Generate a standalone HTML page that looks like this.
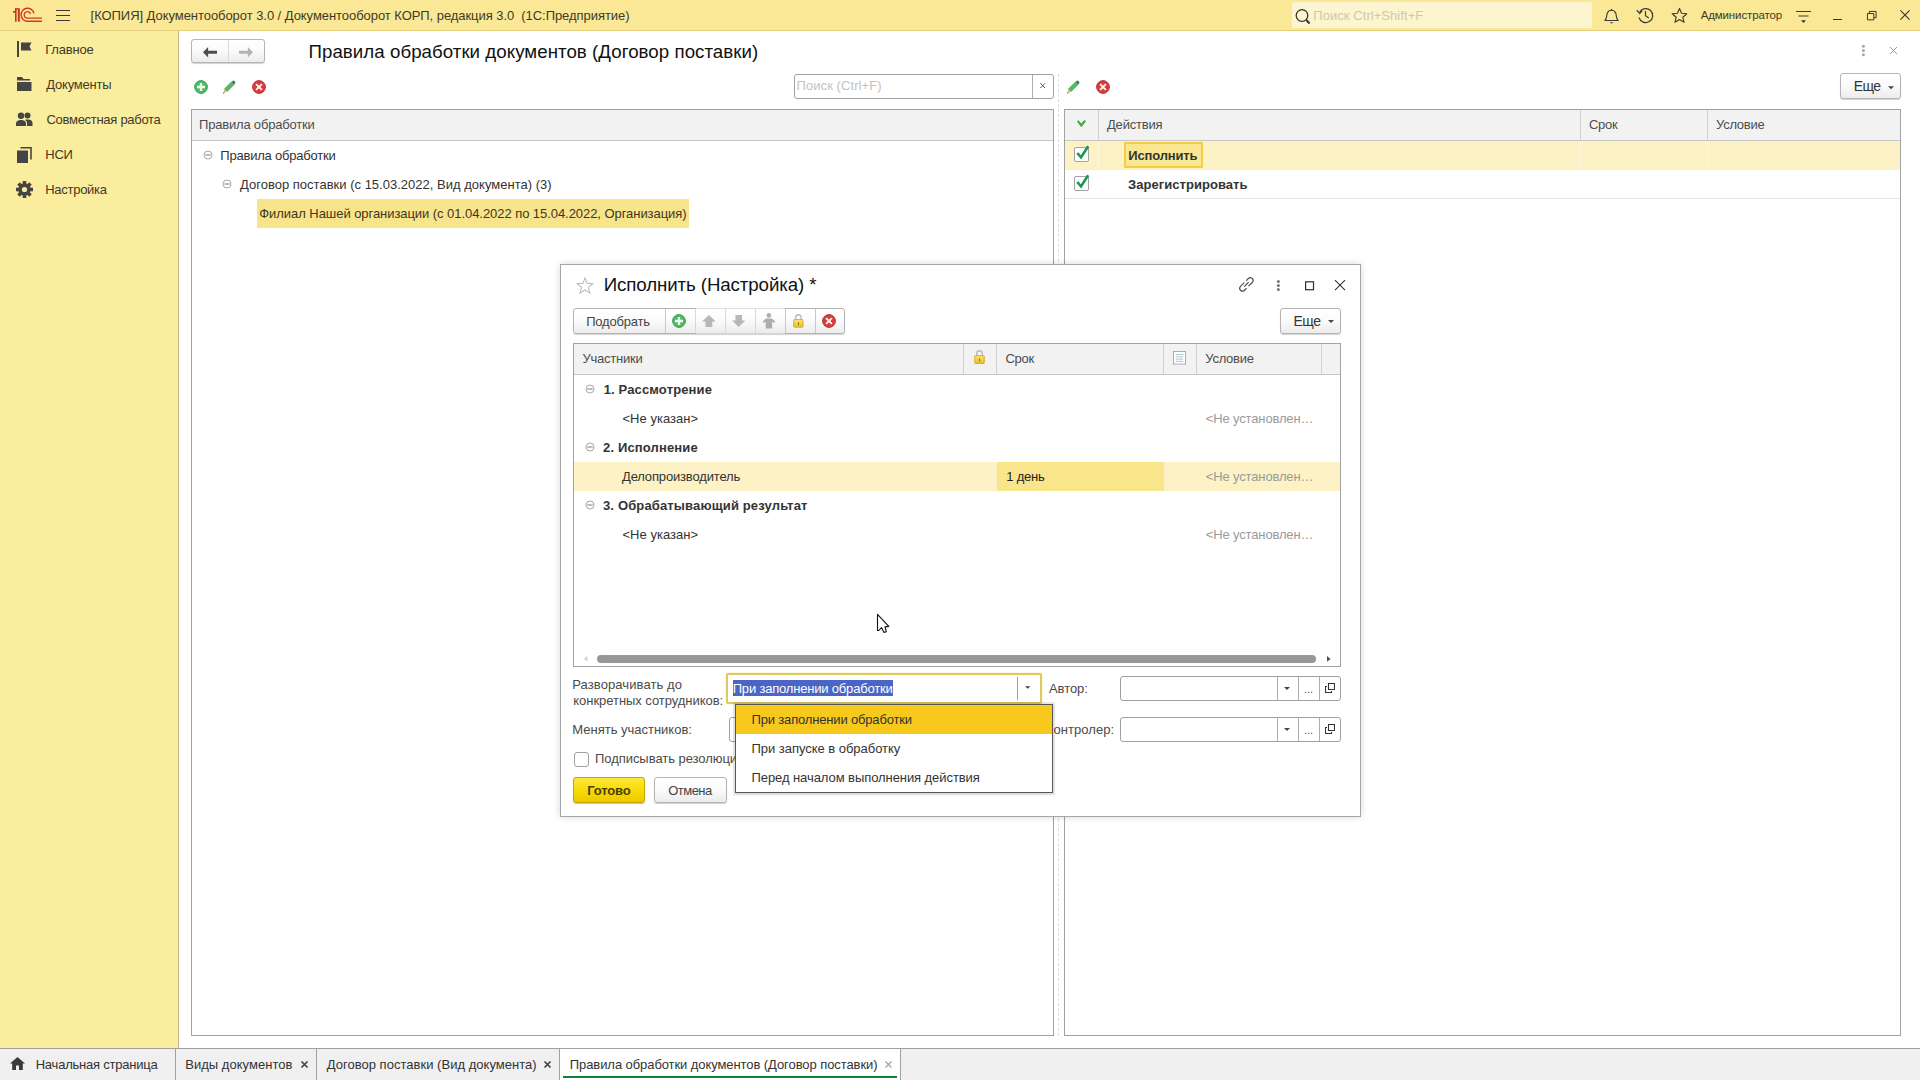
<!DOCTYPE html>
<html lang="ru">
<head>
<meta charset="utf-8">
<title>1C</title>
<style>
*{box-sizing:border-box;margin:0;padding:0}
html,body{width:1920px;height:1080px;overflow:hidden;background:#fff}
body{font-family:"Liberation Sans",sans-serif;font-size:13px;color:#333;position:relative}
.abs{position:absolute}
.t{position:absolute;white-space:pre;line-height:16px;height:16px}
svg{position:absolute;overflow:visible}
/* title bar */
#titlebar{position:absolute;left:0;top:0;width:1920px;height:31px;background:#fae896;border-bottom:1px solid #e3cf7c}
#gsearch{position:absolute;left:1292px;top:2px;width:300px;height:26px;background:#fdf5d0;border-radius:3px}
/* sidebar */
#sidebar{position:absolute;left:0;top:31px;width:179px;height:1017px;background:#fbed9e;border-right:1px solid #c0b788}
#sidebar .t{color:#403a28;left:46px}
/* tab bar */
#tabbar{position:absolute;left:0;top:1048px;width:1920px;height:32px;background:#f0f0f0;border-top:1px solid #a0a0a0}
#tabbar .t{color:#333;top:8px}
.tabsep{position:absolute;top:0;width:1px;height:31px;background:#a0a0a0}
/* buttons */
.btn{position:absolute;border:1px solid #b4b4b4;border-radius:3px;background:linear-gradient(#ffffff 0%,#fbfbfb 45%,#ececec 100%);box-shadow:0 1px 1px rgba(0,0,0,.18)}
.grid{position:absolute;border:1px solid #a1a1a1;background:#fff}
.ghead{position:absolute;left:0;top:0;right:0;height:31px;background:#f2f2f2;border-bottom:1px solid #c6c6c6}
.ghead .t{color:#4d4d4d;top:7px}
.colsep{position:absolute;top:0;width:1px;height:30px;background:#d0d0d0}
.field{position:absolute;border:1px solid #a0a0a0;border-radius:3px;background:#fff}
.fsep{position:absolute;top:0;width:1px;height:100%;background:#adadad}
</style>
</head>
<body>

<!-- ================= TITLE BAR ================= -->
<div id="titlebar">
  <!-- 1C logo -->
  <svg style="left:0;top:0" width="50" height="30" viewBox="0 0 50 30">
    <g fill="#c8371c"><rect x="17.800" y="8.200" width="2" height="13.500"/><rect x="15" y="8.200" width="3" height="1.400"/><rect x="15" y="8.200" width="1.600" height="13.500"/><rect x="13" y="11" width="2.200" height="1.700"/></g>
    <g fill="none" stroke="#cf3b1f"><path d="M33.960 13.350 A6.500 6.500 0 1 0 27.600 21.200 H41.900" stroke-width="1.400"/><path d="M30.490 14.070 A3.200 3.200 0 1 0 27.400 18.100 H41.900" stroke-width="1.250"/></g>
  </svg>
  <!-- hamburger -->
  <div class="abs" style="left:56px;top:10px;width:14px;height:1px;background:#3a3a3a"></div>
  <div class="abs" style="left:56px;top:15px;width:14px;height:1px;background:#3a3a3a"></div>
  <div class="abs" style="left:56px;top:20px;width:14px;height:1px;background:#3a3a3a"></div>
  <div class="t" id="apptitle" style="left:90.60px;top:8px;color:#3f3a26;letter-spacing:-0.054px">[КОПИЯ] Документооборот 3.0 / Документооборот КОРП, редакция 3.0  (1С:Предприятие)</div>
  <div id="gsearch"></div>
  <svg style="left:1293.500px;top:6.500px" width="18" height="18" viewBox="0 0 18 18"><circle cx="8" cy="8.5" r="5.800" fill="none" stroke="#333" stroke-width="1.3"/><path d="M12.3 13 L15.5 16.5" stroke="#333" stroke-width="2"/></svg>
  <div class="t" style="left:1313.30px;top:8px;color:#cfc9a8;letter-spacing:0.056px">Поиск Ctrl+Shift+F</div>
  <!-- bell -->
  <svg style="left:1602.500px;top:7.500px" width="17" height="17.500" viewBox="0 0 18 19" preserveAspectRatio="none"><path d="M2 13.5 C4.5 11.5 3.5 8 4.6 5.5 C5.5 3.5 7 2.5 9 2.5 C11 2.5 12.500 3.5 13.4 5.5 C14.5 8 13.5 11.5 16 13.5 Z" fill="none" stroke="#3a3a3a" stroke-width="1.2" stroke-linejoin="round"/><path d="M7.300 15.5 A1.8 1.8 0 0 0 10.700 15.500 Z" fill="#3a3a3a"/><path d="M9 2.5 V1" stroke="#3a3a3a" stroke-width="1.2"/></svg>
  <!-- history -->
  <svg style="left:1636px;top:6px" width="19" height="19" viewBox="0 0 19 19"><path d="M3.6 6.2 A7 7 0 1 1 3 11.500" fill="none" stroke="#3a3a3a" stroke-width="1.2"/><path d="M0.8 4.2 L3.7 7.600 L6.300 4.500" fill="none" stroke="#3a3a3a" stroke-width="1.2"/><path d="M9.5 5 V9.800 L12.800 12" fill="none" stroke="#3a3a3a" stroke-width="1.2"/></svg>
  <!-- star -->
  <svg style="left:1670.500px;top:7px" width="17" height="17" viewBox="0 0 18 18"><path d="M9 1.5 L11.2 6.6 L16.7 7.100 L12.500 10.800 L13.800 16.200 L9 13.300 L4.200 16.200 L5.500 10.800 L1.300 7.100 L6.800 6.600 Z" fill="none" stroke="#3a3a3a" stroke-width="1.2" stroke-linejoin="round"/></svg>
  <div class="t" id="admin" style="left:1700.70px;top:7px;font-size:11.500px;color:#3f3a26;letter-spacing:-0.131px">Администратор</div>
  <!-- settings lines -->
  <svg style="left:1796px;top:10.500px" width="16" height="13" viewBox="0 0 16 14" preserveAspectRatio="none"><path d="M0 0.5 H15 M2.500 5.500 H12.500" stroke="#3a3a3a" stroke-width="1.1"/><path d="M5 10 H10 L7.500 13 Z" fill="#3a3a3a"/></svg>
  <!-- min / restore / close -->
  <div class="abs" style="left:1833px;top:19px;width:9px;height:1px;background:#333"></div>
  <svg style="left:1866.500px;top:11px" width="10" height="9.300" viewBox="0 0 11 11" preserveAspectRatio="none"><path d="M0.5 3 H7.500 V10.500 H0.500 Z M2.500 3 V0.500 H10 V8 H7.500" fill="none" stroke="#333" stroke-width="1.100"/></svg>
  <svg style="left:1899.500px;top:10px" width="10" height="10" viewBox="0 0 11 11"><path d="M0.5 0.500 L10.500 10.500 M10.500 0.500 L0.500 10.500" stroke="#333" stroke-width="1.200"/></svg>
</div>

<!-- ================= SIDEBAR ================= -->
<div id="sidebar">
  <div class="t" style="left:45.25px;top:11px;letter-spacing:-0.198px">Главное</div>
  <div class="t" style="left:46.25px;top:46px;letter-spacing:-0.209px">Документы</div>
  <div class="t" style="left:46.50px;top:81px;letter-spacing:-0.289px">Совместная работа</div>
  <div class="t" style="left:45.25px;top:116px;letter-spacing:-0.263px">НСИ</div>
  <div class="t" style="left:45.25px;top:151px;letter-spacing:-0.283px">Настройка</div>
  <!-- flag -->
  <svg style="left:17px;top:10px" width="15" height="16" viewBox="0 0 15 16"><rect x="0" y="0" width="2" height="16" fill="#454545"/><path d="M4 1.500 H14.500 L12.500 5.500 L14.500 9.500 H4 Z" fill="#454545"/></svg>
  <!-- folder -->
  <svg style="left:17px;top:46px" width="15" height="14" viewBox="0 0 15 14"><path d="M0 0 H5 L6.500 2 H13 V3.600 H0 Z" fill="#454545"/><rect x="0" y="5" width="14.500" height="9" fill="#454545"/></svg>
  <!-- people -->
  <svg style="left:16px;top:81px" width="17" height="14" viewBox="0 0 17 14"><circle cx="5" cy="3.800" r="3.200" fill="#454545"/><path d="M0 14 V11.500 C0 9 2.500 8 5 8 C7.500 8 10 9 10 11.500 V14 Z" fill="#454545"/><circle cx="11.500" cy="3.400" r="3" fill="#454545"/><path d="M11 14 V11 C11 9.500 10 8.400 9 8 C10 7.600 11 7.500 12 7.500 C14.500 7.500 16.500 8.500 16.500 11 V14 Z" fill="#454545"/></svg>
  <!-- nsi -->
  <svg style="left:17px;top:116px" width="15" height="16" viewBox="0 0 15 16"><path d="M3.500 0.800 H14 V12.500" fill="none" stroke="#454545" stroke-width="1.600"/><rect x="0" y="3.500" width="11" height="12.500" fill="#454545"/></svg>
  <!-- gear -->
  <svg style="left:16px;top:150px" width="17" height="17" viewBox="0 0 17 17"><g transform="translate(8.500 8.500)"><g fill="#454545"><rect x="-1.800" y="-8.500" width="3.600" height="17"/><rect x="-1.800" y="-8.500" width="3.600" height="17" transform="rotate(45)"/><rect x="-1.800" y="-8.500" width="3.600" height="17" transform="rotate(90)"/><rect x="-1.800" y="-8.500" width="3.600" height="17" transform="rotate(135)"/><circle r="6.200"/></g><circle r="2.600" fill="#fbed9e"/></g></svg>
</div>

<svg width="0" height="0" style="position:absolute">
  <defs>
    <radialGradient id="g-green" cx="0.5" cy="0.35" r="0.7"><stop offset="0" stop-color="#5fd06a"/><stop offset="1" stop-color="#1f9e3a"/></radialGradient>
    <radialGradient id="g-red" cx="0.5" cy="0.35" r="0.7"><stop offset="0" stop-color="#ee4a4a"/><stop offset="1" stop-color="#c0161c"/></radialGradient>
    <linearGradient id="g-lock" x1="0" y1="0" x2="0" y2="1"><stop offset="0" stop-color="#f9e37a"/><stop offset="1" stop-color="#e8bd22"/></linearGradient>
    <symbol id="i-add" viewBox="0 0 16 16"><circle cx="8" cy="8" r="6.400" fill="#4fba62" stroke="#2f9c48" stroke-width="0.900"/><path d="M8 4 V12 M4 8 H12" stroke="#eefff2" stroke-width="2.400"/></symbol>
    <symbol id="i-del" viewBox="0 0 16 16"><circle cx="8" cy="8" r="6.400" fill="#da3d3d" stroke="#b6262e" stroke-width="0.900"/><path d="M5.100 5.100 L10.900 10.900 M10.900 5.100 L5.100 10.900" stroke="#fff4f0" stroke-width="1.900"/></symbol>
    <symbol id="i-pencil" viewBox="0 0 16 16"><path d="M3.500 9.900 L10.500 2.900 L13.100 5.500 L6.100 12.500 Z" fill="#57b962" stroke="#3f9a4c" stroke-width="0.700"/><path d="M10.600 3 L11.900 1.700 Q12.500 1.200 13.100 1.700 L14.300 2.900 Q14.800 3.500 14.300 4.100 L13 5.400 Z" fill="#3a7d58"/><path d="M3.600 10 L6 12.400 L2 14.700 Z" fill="#d9bb62"/><path d="M2 14.700 L2.700 13.200 L3.500 14 Z" fill="#444"/></symbol>
    <symbol id="i-minus" viewBox="0 0 10 10"><circle cx="5" cy="5" r="4" fill="#fff" stroke="#a9a9a9" stroke-width="1"/><path d="M2.300 5 H7.700" stroke="#7d7d7d" stroke-width="1"/></symbol>
    <symbol id="i-chk" viewBox="0 0 18 18"><rect x="1.500" y="3.500" width="14" height="14" rx="1.500" fill="#fff" stroke="#a2a2a2" stroke-width="1"/><path d="M4.300 9 L8 13.400 L15.200 2.200" fill="none" stroke="#1d9550" stroke-width="2.600"/></symbol>
    <symbol id="i-lock" viewBox="0 0 13 16"><path d="M3.200 7.500 V4.800 C3.200 0.800 9.800 0.800 9.800 4.800 V7.500" fill="none" stroke="#b9b9b9" stroke-width="1.600"/><rect x="0.800" y="7" width="11.400" height="8.300" rx="1" fill="url(#g-lock)" stroke="#c79f18" stroke-width="0.800"/><rect x="6" y="10" width="1.200" height="3" fill="#8a6d10"/></symbol>
    <symbol id="i-open" viewBox="0 0 10 10"><path d="M3.500 0.500 H9.500 V6.500 H3.500 Z" fill="none" stroke="#333" stroke-width="1.100"/><path d="M2 3.500 H0.500 V9.500 H6.500 V8" fill="none" stroke="#333" stroke-width="1.100"/></symbol>
  </defs>
</svg>
<!-- ================= MAIN CONTENT ================= -->
<div id="main">
  <!-- nav buttons -->
  <div class="btn" style="left:191px;top:39px;width:74px;height:24px"></div>
  <div class="abs" style="left:228px;top:40px;width:1px;height:22px;background:#d9d9d9"></div>
  <svg style="left:203px;top:46.500px" width="14" height="10.500" viewBox="0 0 15 10" preserveAspectRatio="none"><path d="M0 5 L5.500 0 V3.600 H15 V6.400 H5.500 V10 Z" fill="#4c4c4c"/></svg>
  <svg style="left:239px;top:46.500px" width="14" height="10.500" viewBox="0 0 15 10" preserveAspectRatio="none"><path d="M15 5 L9.500 0 V3.600 H0 V6.400 H9.500 V10 Z" fill="#b3b3b3"/></svg>
  <div class="t" id="pagetitle" style="left:308.50px;top:41px;font-size:18.700px;line-height:22px;height:22px;color:#111;letter-spacing:0.046px">Правила обработки документов (Договор поставки)</div>
  <!-- form dots / close -->
  <svg style="left:1861px;top:44px" width="5" height="13" viewBox="0 0 5 13"><g fill="#a6a6a6"><circle cx="2.400" cy="2.300" r="1.500"/><circle cx="2.400" cy="6.500" r="1.500"/><circle cx="2.400" cy="10.700" r="1.500"/></g></svg>
  <svg style="left:1890px;top:47px" width="7" height="7" viewBox="0 0 7 7"><path d="M0 0 L7 7 M7 0 L0 7" stroke="#9a9a9a" stroke-width="1"/></svg>

  <!-- left toolbar icons -->
  <svg class="ic-add" style="left:193px;top:79px" width="16" height="16" viewBox="0 0 16 16"><use href="#i-add"/></svg>
  <svg style="left:221px;top:79px" width="16" height="16" viewBox="0 0 16 16"><use href="#i-pencil"/></svg>
  <svg style="left:251px;top:79px" width="16" height="16" viewBox="0 0 16 16"><use href="#i-del"/></svg>

  <!-- search -->
  <div class="field" style="left:794px;top:74px;width:260px;height:25px"><div class="fsep" style="left:237px"></div></div>
  <div class="t" style="left:796.50px;top:78px;color:#c2c2c2;letter-spacing:0.080px">Поиск (Ctrl+F)</div>
  <svg style="left:1039.800px;top:82.500px" width="5.400" height="5.400" viewBox="0 0 6 6"><path d="M0.300 0.300 L5.700 5.700 M5.700 0.300 L0.300 5.700" stroke="#555" stroke-width="1.100"/></svg>

  <!-- right toolbar -->
  <svg style="left:1065px;top:79px" width="16" height="16" viewBox="0 0 16 16"><use href="#i-pencil"/></svg>
  <svg style="left:1095px;top:79px" width="16" height="16" viewBox="0 0 16 16"><use href="#i-del"/></svg>
  <div class="btn" style="left:1840px;top:73px;width:61px;height:26px"></div>
  <div class="t" style="left:1853.70px;top:78px;font-size:14px;color:#333;letter-spacing:-0.600px">Еще</div>
  <svg style="left:1888px;top:86px" width="6" height="3.300" viewBox="0 0 6 3"><path d="M0 0 H6 L3 3 Z" fill="#444"/></svg>

  <!-- splitter -->
  <div class="abs" style="left:1058px;top:74px;width:0;height:962px;border-left:1px dashed #dedede"></div>

  <!-- LEFT GRID -->
  <div class="grid" style="left:191px;top:109px;width:863px;height:927px">
    <div class="ghead"><div class="t" style="left:7.00px;letter-spacing:-0.192px">Правила обработки</div></div>
    <svg style="left:11px;top:40px" width="10" height="10" viewBox="0 0 10 10"><use href="#i-minus"/></svg>
    <div class="t" style="left:28.25px;top:38px;letter-spacing:-0.207px">Правила обработки</div>
    <svg style="left:30px;top:69px" width="10" height="10" viewBox="0 0 10 10"><use href="#i-minus"/></svg>
    <div class="t" style="left:48.00px;top:67px;letter-spacing:0.011px">Договор поставки (с 15.03.2022, Вид документа) (3)</div>
    <div class="abs" style="left:65px;top:89px;width:432px;height:29px;background:#f8e48b"></div>
    <div class="t" style="left:67.30px;top:96px;color:#3f3620;letter-spacing:-0.056px">Филиал Нашей организации (с 01.04.2022 по 15.04.2022, Организация)</div>
  </div>

  <!-- RIGHT GRID -->
  <div class="grid" style="left:1064px;top:109px;width:837px;height:927px">
    <div class="ghead">
      <div class="colsep" style="left:33px"></div>
      <div class="colsep" style="left:515px"></div>
      <div class="colsep" style="left:642px"></div>
      <svg style="left:12px;top:10px" width="9" height="8" viewBox="0 0 9 8"><path d="M0 1.600 L1.400 0.300 L4.300 3.600 L7.400 0 L9 1.200 L4.300 7.300 Z" fill="#43a83a"/></svg>
      <div class="t" style="left:42.00px;letter-spacing:-0.203px">Действия</div>
      <div class="t" style="left:524.00px;letter-spacing:-0.283px">Срок</div>
      <div class="t" style="left:651.00px;letter-spacing:-0.253px">Условие</div>
    </div>
    <!-- row 1 selected -->
    <div class="abs" style="left:0;top:31px;width:835px;height:28px;background:#fcf2c6"></div>
    <div class="abs" style="left:33px;top:31px;width:1px;height:28px;background:#fdf8e2"></div>
    <div class="abs" style="left:515px;top:31px;width:1px;height:28px;background:#fdf8e2"></div>
    <div class="abs" style="left:642px;top:31px;width:1px;height:28px;background:#fdf8e2"></div>
    <div class="abs" style="left:0;top:59px;width:835px;height:1px;background:#ececec"></div>
    <div class="abs" style="left:0;top:88px;width:835px;height:1px;background:#e4e4e4"></div>
    <div class="abs" style="left:59px;top:32px;width:79px;height:26px;background:#fae78f;border:2px solid #f3cd45;border-radius:1px"></div>
    <div class="t" style="left:63.25px;top:38px;font-weight:bold;color:#333;letter-spacing:-0.158px">Исполнить</div>
    <div class="t" style="left:63.00px;top:67px;font-weight:bold;color:#333;letter-spacing:0.048px">Зарегистрировать</div>
    <svg style="left:8px;top:34px" width="18" height="18" viewBox="0 0 18 18"><use href="#i-chk"/></svg>
    <svg style="left:8px;top:63px" width="18" height="18" viewBox="0 0 18 18"><use href="#i-chk"/></svg>
  </div>
</div>


<!-- ================= DIALOG ================= -->
<div id="dlg" class="abs" style="left:560px;top:264px;width:801px;height:553px;background:#fff;border:1px solid #a6a6a6;box-shadow:0 0 7px 0 rgba(0,0,0,.16)">
  <!-- star -->
  <svg style="left:15px;top:12px" width="18" height="17" viewBox="0 0 17 16"><path d="M8.500 0.800 L10.500 6 L16 6.300 L11.700 9.800 L13.200 15.200 L8.500 12.200 L3.800 15.200 L5.300 9.800 L1 6.300 L6.500 6 Z" fill="none" stroke="#bdbdbd" stroke-width="1"/></svg>
  <div class="t" id="dlgtitle" style="left:42.70px;top:9px;font-size:18.700px;line-height:22px;height:22px;color:#111;letter-spacing:-0.094px">Исполнить (Настройка) *</div>
  <!-- link -->
  <svg style="left:677px;top:11px" width="17" height="17" viewBox="0 0 17 17"><g fill="none" stroke="#4f4f4f" stroke-width="1.150" stroke-linecap="round" transform="translate(8.400 8.400) rotate(-45)"><path d="M-0.600 -2.800 H-5.500 a2.800 2.800 0 0 0 0 5.600 H-3"/><path d="M0.600 2.800 H5.500 a2.800 2.800 0 0 0 0 -5.600 H3"/><path d="M-2.700 0 H2.700"/></g></svg>
  <!-- dots -->
  <svg style="left:715px;top:15px" width="5" height="12" viewBox="0 0 5 12"><g fill="#767676"><circle cx="2.400" cy="1.500" r="1.500"/><circle cx="2.400" cy="5.600" r="1.500"/><circle cx="2.400" cy="9.600" r="1.500"/></g></svg>
  <!-- maximize -->
  <svg style="left:744px;top:16px" width="10" height="10" viewBox="0 0 10 10"><rect x="0.600" y="0.800" width="7.900" height="7.900" fill="none" stroke="#2e2e2e" stroke-width="1.200"/></svg>
  <!-- close -->
  <svg style="left:774px;top:15px" width="10" height="10" viewBox="0 0 10 10"><path d="M0 0.200 L10 10.200 M10 0.200 L0 10.200" stroke="#2e2e2e" stroke-width="1.050"/></svg>

  <!-- toolbar -->
  <div class="btn" style="left:12px;top:43px;width:272px;height:26px"></div>
  <div class="abs" style="left:104px;top:44px;width:1px;height:24px;background:#c8c8c8"></div>
  <div class="abs" style="left:134px;top:44px;width:1px;height:24px;background:#d9d9d9"></div>
  <div class="abs" style="left:164px;top:44px;width:1px;height:24px;background:#d9d9d9"></div>
  <div class="abs" style="left:194px;top:44px;width:1px;height:24px;background:#d9d9d9"></div>
  <div class="abs" style="left:224px;top:44px;width:1px;height:24px;background:#c8c8c8"></div>
  <div class="abs" style="left:254px;top:44px;width:1px;height:24px;background:#c8c8c8"></div>
  <div class="abs" style="left:135px;top:43px;width:89px;height:26px;border-top:1px solid #dedede;border-bottom:1px solid #d4d4d4"></div>
  <div class="t" style="left:25.20px;top:49px;color:#444;letter-spacing:-0.197px">Подобрать</div>
  <svg style="left:110px;top:48px" width="16" height="16" viewBox="0 0 16 16"><use href="#i-add"/></svg>
  <!-- up arrow -->
  <svg style="left:140.600px;top:49.900px" width="13.800" height="11.900" viewBox="0 0 15 13" preserveAspectRatio="none"><path d="M7.500 0 L15 7 H11.200 V13 H3.800 V7 H0 Z" fill="#b7b7b7"/></svg>
  <!-- down arrow -->
  <svg style="left:170.800px;top:50.400px" width="13.400" height="11.900" viewBox="0 0 15 13" preserveAspectRatio="none"><path d="M7.500 13 L15 6 H11.200 V0 H3.800 V6 H0 Z" fill="#b7b7b7"/></svg>
  <!-- person -->
  <svg style="left:201px;top:47.900px" width="13.800" height="15.900" viewBox="0 0 15 17" preserveAspectRatio="none"><circle cx="7.500" cy="2.600" r="2.500" fill="#adadad"/><path d="M0.500 9.500 L4 5.800 H11 L14.500 9.500 L12.800 10.800 L11 9.200 V16.500 H4 V9.200 L2.200 10.800 Z" fill="#adadad"/></svg>
  <!-- lock -->
  <svg style="left:232.200px;top:47.900px" width="10.800" height="14.900" viewBox="0 0 13 16" preserveAspectRatio="none"><use href="#i-lock"/></svg>
  <svg style="left:260px;top:48px" width="16" height="16" viewBox="0 0 16 16"><use href="#i-del"/></svg>
  <!-- Еще -->
  <div class="btn" style="left:719px;top:43px;width:61px;height:26px"></div>
  <div class="t" style="left:732.50px;top:48px;font-size:14px;color:#333;letter-spacing:-0.475px">Еще</div>
  <svg style="left:767px;top:55px" width="6" height="3" viewBox="0 0 6 3"><path d="M0 0 H6 L3 3 Z" fill="#444"/></svg>

  <!-- grid -->
  <div class="grid" style="left:12px;top:78px;width:768px;height:324px">
    <div class="ghead">
      <div class="colsep" style="left:389px"></div>
      <div class="colsep" style="left:422px"></div>
      <div class="colsep" style="left:589px"></div>
      <div class="colsep" style="left:622px"></div>
      <div class="colsep" style="left:747px"></div>
      <div class="t" style="left:8.50px;letter-spacing:-0.230px">Участники</div>
      <svg style="left:400px;top:5.300px" width="11" height="15.200" viewBox="0 0 13 16" preserveAspectRatio="none"><use href="#i-lock"/></svg>
      <div class="t" style="left:431.50px;letter-spacing:-0.283px">Срок</div>
      <svg style="left:599px;top:7px" width="13" height="13.500" viewBox="0 0 14 15" preserveAspectRatio="none"><rect x="0.500" y="0.500" width="13" height="14" fill="#fff" stroke="#9aa7b2" stroke-width="1"/><path d="M3 4 H11 M3 6.500 H11 M3 9 H11 M3 11.500 H11" stroke="#9fc3c8" stroke-width="1"/></svg>
      <div class="t" style="left:631.30px;letter-spacing:-0.270px">Условие</div>
    </div>
    <!-- selected row -->
    <div class="abs" style="left:0;top:118px;width:766px;height:29px;background:#fcf2c6"></div>
    <div class="abs" style="left:423px;top:118px;width:167px;height:29px;background:#f9e68a"></div>
    <!-- rows -->
    <svg style="left:10.600px;top:39.6px" width="10" height="10" viewBox="0 0 10 10"><use href="#i-minus"/></svg>
    <div class="t" style="left:29.70px;top:38px;font-weight:bold;letter-spacing:0.137px">1. Рассмотрение</div>
    <div class="t" style="left:48.50px;top:67px;letter-spacing:0.025px">&lt;Не указан&gt;</div>
    <div class="t" style="left:631.80px;top:67px;color:#9a9a9a;letter-spacing:-0.145px">&lt;Не установлен…</div>
    <svg style="left:10.600px;top:97.6px" width="10" height="10" viewBox="0 0 10 10"><use href="#i-minus"/></svg>
    <div class="t" style="left:29.00px;top:96px;font-weight:bold;letter-spacing:0.152px">2. Исполнение</div>
    <div class="t" style="left:48.00px;top:125px;letter-spacing:-0.158px">Делопроизводитель</div>
    <div class="t" style="left:432.25px;top:125px;color:#222;letter-spacing:-0.217px">1 день</div>
    <div class="t" style="left:631.80px;top:125px;color:#9a9a9a;letter-spacing:-0.145px">&lt;Не установлен…</div>
    <svg style="left:10.600px;top:155.6px" width="10" height="10" viewBox="0 0 10 10"><use href="#i-minus"/></svg>
    <div class="t" style="left:29.00px;top:154px;font-weight:bold;letter-spacing:0.143px">3. Обрабатывающий результат</div>
    <div class="t" style="left:48.50px;top:183px;letter-spacing:0.025px">&lt;Не указан&gt;</div>
    <div class="t" style="left:631.80px;top:183px;color:#9a9a9a;letter-spacing:-0.145px">&lt;Не установлен…</div>
    <!-- scrollbar -->
    <svg style="left:10.300px;top:312px" width="3.400" height="5.400" viewBox="0 0 5 7" preserveAspectRatio="none"><path d="M5 0 V7 L0 3.500 Z" fill="#cdcdcd"/></svg>
    <div class="abs" style="left:23px;top:311px;width:719px;height:8px;border-radius:4px;background:#979797"></div>
    <svg style="left:753px;top:311.800px" width="3.600" height="5.800" viewBox="0 0 5 7" preserveAspectRatio="none"><path d="M0 0 V7 L5 3.500 Z" fill="#505050"/></svg>
  </div>

  <!-- bottom fields -->
  <div class="t" style="left:11.30px;top:412px;color:#4a4a4a;letter-spacing:0.086px">Разворачивать до</div>
  <div class="t" style="left:12.30px;top:428px;color:#4a4a4a;letter-spacing:-0.047px">конкретных сотрудников:</div>
  <div class="t" style="left:11.30px;top:457px;color:#4a4a4a;letter-spacing:-0.008px">Менять участников:</div>
  <!-- hidden field edge under dropdown -->
  <div class="field" style="left:168px;top:452px;width:200px;height:25px"></div>
  <!-- focused select -->
  <div class="abs" style="left:165px;top:408px;width:316px;height:31px;border:2px solid #dfc961;border-radius:2px;background:#fff;box-shadow:0 0 0 1px #fdf9e0"></div>
  <div class="abs" style="left:456px;top:412px;width:1px;height:23px;background:#9c9c9c"></div>
  <svg style="left:464px;top:421px" width="5.400" height="3" viewBox="0 0 6 3"><path d="M0 0 H6 L3 3 Z" fill="#444"/></svg>
  <div class="abs" style="left:172px;top:415px;width:160px;height:16px;background:#4a65c3"></div>
  <div class="t" style="left:171.70px;top:416px;color:#fff;letter-spacing:-0.187px">При заполнении обработки</div>

  <div class="t" style="left:488.00px;top:416px;color:#4a4a4a;letter-spacing:-0.072px">Автор:</div>
  <div class="field" style="left:559px;top:411px;width:221px;height:25px"><div class="fsep" style="left:156px"></div><div class="fsep" style="left:177px"></div><div class="fsep" style="left:198px"></div></div>
  <div class="t" style="left:484.80px;top:457px;color:#4a4a4a;letter-spacing:0.060px">Контролер:</div>
  <div class="field" style="left:559px;top:452px;width:221px;height:25px"><div class="fsep" style="left:156px"></div><div class="fsep" style="left:177px"></div><div class="fsep" style="left:198px"></div></div>
  <svg style="left:723px;top:422px" width="6" height="3" viewBox="0 0 6 3"><path d="M0 0 H6 L3 3 Z" fill="#444"/></svg>
  <svg style="left:723px;top:463px" width="6" height="3" viewBox="0 0 6 3"><path d="M0 0 H6 L3 3 Z" fill="#444"/></svg>
  <div class="t" style="left:743px;top:416px;color:#444;font-size:11px">...</div>
  <div class="t" style="left:743px;top:457px;color:#444;font-size:11px">...</div>
  <svg style="left:764px;top:418px" width="10" height="10" viewBox="0 0 10 10"><use href="#i-open"/></svg>
  <svg style="left:764px;top:459px" width="10" height="10" viewBox="0 0 10 10"><use href="#i-open"/></svg>

  <!-- checkbox -->
  <div class="abs" style="left:13px;top:487px;width:15px;height:15px;border:1px solid #a0a0a0;border-radius:3px;background:#fff"></div>
  <div class="t" style="left:34px;top:486px;color:#4a4a4a;letter-spacing:-0.050px">Подписывать резолюцию</div>

  <!-- buttons -->
  <div class="abs" style="left:12px;top:512px;width:72px;height:26px;border:1px solid #c6a600;border-radius:3px;background:linear-gradient(#fde83a 0%,#f6d800 60%,#ecc900 100%);box-shadow:0 1px 1px rgba(0,0,0,.25)"></div>
  <div class="t" style="left:26.20px;top:518px;font-weight:bold;color:#4a3f00;letter-spacing:-0.139px">Готово</div>
  <div class="btn" style="left:93px;top:512px;width:73px;height:26px"></div>
  <div class="t" style="left:107.30px;top:518px;color:#444;letter-spacing:-0.543px">Отмена</div>

  <!-- dropdown list -->
  <div class="abs" style="left:174px;top:439px;width:318px;height:89px;background:#fff;border:1px solid #565656;box-shadow:0 0 0 2px rgba(0,0,0,.08),0 1px 3px 1px rgba(0,0,0,.07)">
    <div class="abs" style="left:0;top:0;width:316px;height:29px;background:#f7c91c"></div>
    <div class="t" style="left:15.50px;top:7px;color:#333;letter-spacing:-0.165px">При заполнении обработки</div>
    <div class="t" style="left:15.50px;top:36px;color:#333;letter-spacing:-0.034px">При запуске в обработку</div>
    <div class="t" style="left:15.50px;top:65px;color:#333;letter-spacing:-0.072px">Перед началом выполнения действия</div>
  </div>
</div>
<!-- cursor -->
<svg style="left:877px;top:614px" width="13" height="20" viewBox="0 0 13 20"><path d="M0.500 0.300 L0.500 16.500 L1.800 16.500 L4.500 13.600 L7 18.400 L9.300 17.800 L8 12.900 L11.800 12.400 Z" fill="#fff" stroke="#111" stroke-width="1.100" stroke-linejoin="round"/></svg>


<!-- ================= TAB BAR ================= -->
<div id="tabbar">
  <svg style="left:10px;top:8px" width="15" height="13" viewBox="0 0 15 13"><path d="M7.500 0 L15 6.500 H12.800 V13 H9 V8.500 H6 V13 H2.200 V6.500 H0 Z" fill="#3a3a3a"/></svg>
  <div class="t" style="left:35.70px;letter-spacing:-0.215px">Начальная страница</div>
  <div class="tabsep" style="left:175px"></div>
  <div class="t" style="left:185.25px;letter-spacing:0.028px">Виды документов</div>
  <svg style="left:300.700px;top:12px" width="7" height="7" viewBox="0 0 7 7"><path d="M0.500 0.500 L6.500 6.500 M6.500 0.500 L0.500 6.500" stroke="#444" stroke-width="1.700"/></svg>
  <div class="tabsep" style="left:316px"></div>
  <div class="t" style="left:326.75px;letter-spacing:0.022px">Договор поставки (Вид документа)</div>
  <svg style="left:544.100px;top:12px" width="7" height="7" viewBox="0 0 7 7"><path d="M0.500 0.500 L6.500 6.500 M6.500 0.500 L0.500 6.500" stroke="#444" stroke-width="1.700"/></svg>
  <div class="tabsep" style="left:559px"></div>
  <div class="abs" style="left:560px;top:0;width:340px;height:31px;background:#fff"></div>
  <div class="abs" style="left:563px;top:27px;width:334px;height:2px;background:#12813c"></div>
  <div class="t" style="left:569.80px;letter-spacing:-0.079px">Правила обработки документов (Договор поставки)</div>
  <svg style="left:884.700px;top:12px" width="7" height="7" viewBox="0 0 7 7"><path d="M0.500 0.500 L6.500 6.500 M6.500 0.500 L0.500 6.500" stroke="#a5a5a5" stroke-width="1.300"/></svg>
  <div class="tabsep" style="left:900px"></div>
</div>

</body>
</html>
